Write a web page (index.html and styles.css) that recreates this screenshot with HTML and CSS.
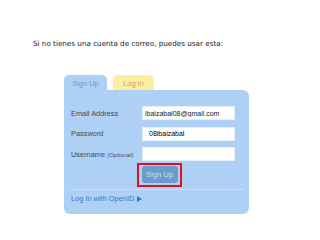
FILE: index.html
```html
<!DOCTYPE html>
<html>
<head>
<meta charset="utf-8">
<link rel="stylesheet" href="styles.css">
</head>
<body>
<p class="intro">Si no tienes una cuenta de correo, puedes usar esta:</p>

<div class="box">
  <div class="tabs">
    <div class="tab tab-active">Sign Up</div>
    <div class="tab tab-login">Log In</div>
  </div>
  <div class="panel">
    <div class="row">
      <label class="label">Email Address</label>
      <input class="field" type="text" value="ibaizabal08@gmail.com">
    </div>
    <div class="row">
      <label class="label">Password</label>
      <input class="field field-pass" type="text" value="08ibaizabal">
    </div>
    <div class="row">
      <label class="label">Username <small>(Optional)</small></label>
      <input class="field" type="text" value="">
    </div>
    <div class="actions">
      <div class="highlight">
        <div class="button">Sign Up</div>
      </div>
    </div>
    <div class="divider"></div>
    <a class="openid" href="#">Log In with OpenID
      <svg class="arrow" width="5" height="6" viewBox="0 0 5 6"><path d="M0 0L5 3L0 6Z" fill="#3b78c2"/></svg>
    </a>
  </div>
</div>
</body>
</html>
```

FILE: styles.css
```css
html, body
{
  margin: 0;
  padding: 0;
  background-color: #ffffff;
}

.intro
{
  margin: 0;
  padding: 39px 0 0 33px;
  font-family: "DejaVu Sans", sans-serif;
  font-size: 7.2px;
  line-height: 10px;
  color: #1a1a1a;
}

.box
{
  margin: 26px 0 0 64px;
  width: 185px;
  font-family: "Liberation Sans", Arial, sans-serif;
  font-size: 7.4px;
}

.tabs
{
  display: flex;
  gap: 6px;
  height: 15px;
}

.tab
{
  width: 43px;
  border-radius: 5px 5px 0 0;
  text-align: center;
  line-height: 17px;
}

.tab-active
{
  background-color: #aed0f4;
  color: #7b95b8;
}

.tab-login
{
  width: 41px;
  background-color: #faeea0;
  color: #c6a853;
}

.panel
{
  background-color: #aed0f4;
  border-radius: 0 6px 6px 6px;
  padding: 16px 7px 10px 7px;
}

.row
{
  display: flex;
  align-items: center;
  height: 14px;
  margin-bottom: 6.5px;
}

.label
{
  width: 71px;
  color: #474c54;
}

.label small
{
  font-size: 6px;
}

.field
{
  box-sizing: border-box;
  width: 93px;
  height: 14px;
  margin: 0;
  padding: 0 2px;
  border: 1px solid #e6eef7;
  background-color: #ffffff;
  font-family: "Liberation Sans", Arial, sans-serif;
  font-size: 7px;
  color: #222222;
}

.field-pass
{
  padding-left: 6px;
  color: #000000;
}

.actions
{
  display: flex;
  margin: -5px 0 0 66px;
}

.highlight
{
  box-sizing: border-box;
  width: 45px;
  height: 24px;
  border: 2px solid #e01020;
  display: flex;
  align-items: center;
  justify-content: center;
}

.button
{
  width: 36px;
  height: 17px;
  line-height: 17px;
  border-radius: 3px;
  background-color: #6a9dcd;
  color: #c9ddf2;
  text-align: center;
  font-size: 7.6px;
}

.divider
{
  height: 1px;
  margin: 2px -1px 0 -1px;
  background-color: #c9e0f8;
}

.openid
{
  display: flex;
  align-items: center;
  gap: 3px;
  margin-top: 4px;
  line-height: 10px;
  color: #3b78c2;
  text-decoration: none;
}
```
